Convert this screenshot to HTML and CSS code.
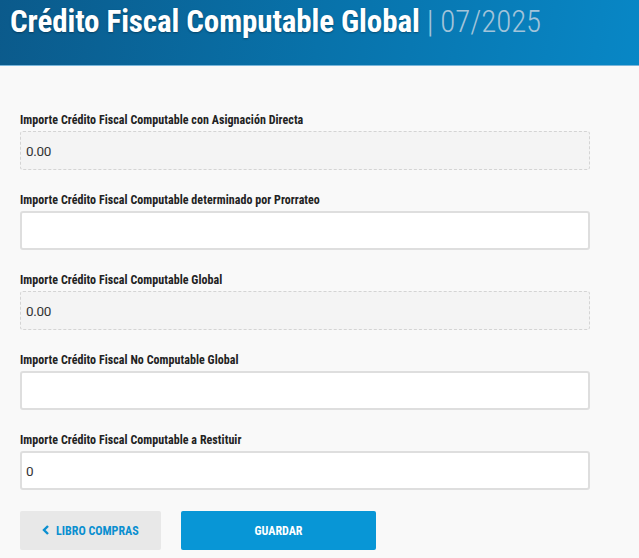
FILE: index.html
```html
<!DOCTYPE html>
<html lang="es">
<head>
    <meta charset="UTF-8">
    <title>Crédito Fiscal Computable Global</title>
    <link rel="stylesheet" href="styles.css">
</head>
<body>
    <header class="page-header">
        <h1>Crédito Fiscal Computable Global <span class="period">| 07/2025</span></h1>
    </header>

    <main class="form">
        <div class="field">
            <label for="asignacion">Importe Crédito Fiscal Computable con Asignación Directa</label>
            <input type="text" id="asignacion" class="readonly" value="0.00" readonly>
        </div>
        <div class="field">
            <label for="prorrateo">Importe Crédito Fiscal Computable determinado por Prorrateo</label>
            <input type="text" id="prorrateo" value="">
        </div>
        <div class="field">
            <label for="global">Importe Crédito Fiscal Computable Global</label>
            <input type="text" id="global" class="readonly" value="0.00" readonly>
        </div>
        <div class="field">
            <label for="noComputable">Importe Crédito Fiscal No Computable Global</label>
            <input type="text" id="noComputable" value="">
        </div>
        <div class="field">
            <label for="restituir">Importe Crédito Fiscal Computable a Restituir</label>
            <input type="text" id="restituir" value="0">
        </div>

        <div class="actions">
            <button class="btn btn-back">
                <svg width="8" height="10" viewBox="0 0 8 10"><path d="M6 1 L2 5 L6 9" fill="none" stroke="currentColor" stroke-width="2.4"/></svg>
                LIBRO COMPRAS
            </button>
            <button class="btn btn-save">GUARDAR</button>
        </div>
    </main>
</body>
</html>
```

FILE: styles.css
```css
:root {
    --page-bg: #f9f9f9;
    --header-dark: #0b5a8b;
    --header-light: #0887c6;
    --text: #222;
    --border: #dedede;
    --readonly-bg: #f4f4f4;
    --blue: #0896d6;
}

body {
    margin: 0;
    background: var(--page-bg);
    font-family: Roboto, "Liberation Sans", sans-serif;
    color: var(--text);
}

.page-header {
    height: 65px;
    background: linear-gradient(100deg, var(--header-dark) 0%, #0872aa 50%, var(--header-light) 100%);
    border-bottom: 1px solid #7ab6da;
    padding: 0 10px;
}
.page-header h1 {
    margin: 0;
    padding-top: 3px;
    font-size: 31px;
    font-weight: 700;
    font-stretch: condensed;
    color: #fff;
    text-shadow: 0 1px 2px rgba(0, 0, 0, 0.35);
    letter-spacing: -0.1px;
}
.period {
    font-weight: 300;
    color: #a2c4da;
    text-shadow: none;
}

.form {
    padding: 47px 49px 0 20px;
}
.field {
    display: flex;
    flex-direction: column;
    margin-bottom: 23px;
}
label {
    font-size: 12px;
    font-weight: 700;
    font-stretch: condensed;
    line-height: 14px;
    margin-bottom: 4px;
    letter-spacing: 0.05px;
}
input {
    height: 39px;
    box-sizing: border-box;
    border: 2px solid var(--border);
    border-radius: 3px;
    background: #fff;
    padding: 0 4px;
    font-family: Roboto, "Liberation Sans", sans-serif;
    font-size: 13.5px;
    letter-spacing: -0.3px;
    color: #333;
    outline: none;
}
input.readonly {
    background: var(--readonly-bg);
    border: 1px dashed #d4d4d4;
    padding: 0 5px;
}

.actions {
    display: flex;
    gap: 20px;
    margin-top: -2px;
}
.btn {
    height: 39px;
    border: none;
    border-radius: 2px;
    font-family: Roboto, "Liberation Sans", sans-serif;
    font-size: 12px;
    font-weight: 700;
    font-stretch: condensed;
    cursor: pointer;
}
.btn-back {
    width: 141px;
    background: #e8e8e8;
    color: #0a8fd0;
}
.btn-back svg {
    margin-right: 3px;
}
.btn-save {
    width: 195px;
    background: var(--blue);
    color: #fff;
}
```
